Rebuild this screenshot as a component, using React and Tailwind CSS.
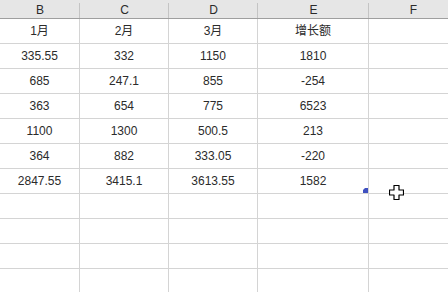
import React from "react";

const cols = ["B", "C", "D", "E", "F"];
const widths = ["w-[80px]", "w-[89px]", "w-[89px]", "w-[111px]", "w-[89px]"];
const data = [
  ["1月", "2月", "3月", "增长额", ""],
  ["335.55", "332", "1150", "1810", ""],
  ["685", "247.1", "855", "-254", ""],
  ["363", "654", "775", "6523", ""],
  ["1100", "1300", "500.5", "213", ""],
  ["364", "882", "333.05", "-220", ""],
  ["2847.55", "3415.1", "3613.55", "1582", ""],
  ["", "", "", "", ""],
  ["", "", "", "", ""],
  ["", "", "", "", ""],
  ["", "", "", "", ""],
];

export default function App() {
  return (
    <div
      className="relative w-[448px] h-[292px] overflow-hidden bg-white text-[12px] text-[#2b2b2b]"
      style={{ fontFamily: '"Liberation Sans", "Noto Sans CJK SC", sans-serif' }}
    >
      <div className="flex h-[19px] bg-[#e6e6e6] border-b border-[#9f9f9f]">
        {cols.map((c, i) => (
          <div key={c} className={`${widths[i]} shrink-0 relative flex items-center justify-center leading-none pt-[1px]`}>
            {c}
            <div className="absolute right-0 top-[3px] bottom-0 w-px bg-[#c4c4c4]" />
          </div>
        ))}
      </div>
      {data.map((row, r) => (
        <div key={r} className="flex h-[25px]">
          {row.map((v, i) => (
            <div
              key={i}
              className={`${widths[i]} shrink-0 border-r border-b border-[#d4d4d4] flex items-center justify-center leading-none`}
            >
              {v}
            </div>
          ))}
        </div>
      ))}
      <svg className="absolute left-[363px] top-[188px]" width="5" height="5" viewBox="0 0 5 5">
        <polygon points="2,0 5,0 5,5 0,5 0,2" fill="#3f51c0" />
      </svg>
      <svg className="absolute left-[389px] top-[185px]" width="15" height="15" viewBox="0 0 15 15">
        <path
          d="M5 0.5 H10 V5 H14.5 V10 H10 V14.5 H5 V10 H0.5 V5 H5 Z"
          fill="white"
          stroke="black"
          strokeWidth="1.2"
          strokeLinejoin="round"
        />
      </svg>
    </div>
  );
}
